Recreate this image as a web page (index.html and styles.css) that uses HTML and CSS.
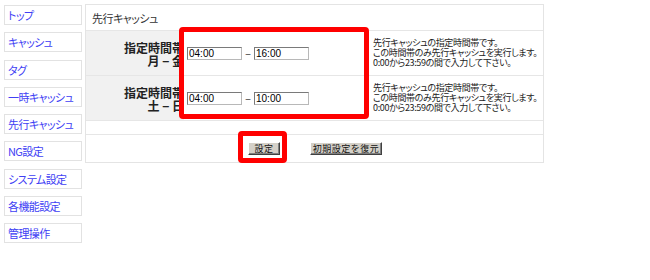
FILE: index.html
```html
<!DOCTYPE html>
<html lang="ja">
<head>
<meta charset="utf-8">
<title>先行キャッシュ</title>
<link rel="stylesheet" href="styles.css">
</head>
<body>
<div class="page">
  <nav class="nav">
    <a class="nav-item" href="#">トップ</a>
    <a class="nav-item" href="#">キャッシュ</a>
    <a class="nav-item" href="#">タグ</a>
    <a class="nav-item" href="#">一時キャッシュ</a>
    <a class="nav-item" href="#">先行キャッシュ</a>
    <a class="nav-item" href="#">NG設定</a>
    <a class="nav-item" href="#">システム設定</a>
    <a class="nav-item" href="#">各機能設定</a>
    <a class="nav-item" href="#">管理操作</a>
  </nav>
  <main class="main">
    <div class="title">先行キャッシュ</div>
    <div class="row">
      <div class="label"><span>指定時間帯</span><span>月 − 金</span></div>
      <div class="inputs"><input class="time" type="text" value="04:00"><span class="dash">−</span><input class="time" type="text" value="16:00"></div>
      <div class="desc">先行キャッシュの指定時間帯です。<br>この時間帯のみ先行キャッシュを実行します。<br>0:00から23:59の間で入力して下さい。</div>
    </div>
    <div class="row">
      <div class="label"><span>指定時間帯</span><span>土 − 日</span></div>
      <div class="inputs"><input class="time" type="text" value="04:00"><span class="dash">−</span><input class="time" type="text" value="10:00"></div>
      <div class="desc">先行キャッシュの指定時間帯です。<br>この時間帯のみ先行キャッシュを実行します。<br>0:00から23:59の間で入力して下さい。</div>
    </div>
    <div class="spacer"></div>
    <div class="actions">
      <button class="btn btn-set" type="button">設定</button>
      <button class="btn btn-reset" type="button">初期設定を復元</button>
    </div>
  </main>
  <div class="annot annot-inputs"></div>
  <div class="annot annot-button"></div>
</div>
</body>
</html>
```

FILE: styles.css
```css
html, body {
  margin: 0;
  padding: 0;
  background: #fff;
}
body {
  font-family: "Noto Sans CJK JP", "Noto Sans", sans-serif;
  font-feature-settings: "palt";
  color: #333;
}
.page {
  position: relative;
  display: flex;
  align-items: flex-start;
  gap: 3px;
  padding: 4px 0 0 4px;
  width: 650px;
  height: 280px;
  box-sizing: border-box;
}
.nav {
  display: flex;
  flex-direction: column;
  width: 78px;
  padding-top: 1px;
}
.nav-item {
  display: flex;
  align-items: center;
  box-sizing: border-box;
  height: 20px;
  margin-bottom: 7.25px;
  padding-left: 3px;
  border: 1px solid #e2e2e2;
  font-size: 11px;
  letter-spacing: -0.6px;
  color: #4040f4;
  text-decoration: none;
  white-space: nowrap;
}
.main {
  width: 459px;
  box-sizing: border-box;
  border: 1px solid #e4e4e4;
}
.title {
  height: 25px;
  display: flex;
  align-items: center;
  padding-left: 6px;
  font-size: 11px;
  letter-spacing: -0.5px;
  color: #333;
}
.row {
  display: grid;
  grid-template-columns: 98px 186px 1fr;
  height: 44px;
  border-top: 1px solid #e6e6e6;
}
.label {
  background: #f1f1f1;
  display: flex;
  flex-direction: column;
  justify-content: center;
  align-items: flex-end;
  padding-top: 1px;
  font-size: 12px;
  font-weight: bold;
  line-height: 13px;
  color: #222;
  white-space: nowrap;
}
.inputs {
  display: flex;
  align-items: center;
  gap: 3px;
  padding-left: 3px;
}
.time {
  box-sizing: border-box;
  width: 55px;
  height: 13px;
  margin: 0;
  padding: 0 1px;
  border: 1px solid;
  border-color: #7a7a7a #b8b8b8 #b8b8b8 #7a7a7a;
  font-family: "Liberation Sans", sans-serif;
  font-size: 10px;
  color: #000;
  background: #fff;
}
.dash {
  width: 6px;
  font-size: 10px;
  color: #333;
  text-align: center;
}
.desc {
  display: flex;
  align-items: center;
  padding-left: 3px;
  font-size: 9px;
  letter-spacing: -0.35px;
  line-height: 10px;
  color: #222;
  white-space: nowrap;
}
.spacer {
  height: 13px;
  border-top: 1px solid #e6e6e6;
}
.actions {
  height: 27px;
  border-top: 1px solid #e6e6e6;
  display: flex;
  align-items: center;
  justify-content: center;
  gap: 30px;
  padding-left: 1px;
}
.btn {
  display: inline-flex;
  align-items: center;
  justify-content: center;
  box-sizing: border-box;
  height: 13px;
  margin: 0;
  padding: 0;
  border: 1px solid;
  border-color: #fff #404040 #404040 #fff;
  box-shadow: inset -1px -1px #808080;
  background: #d4d0c8;
  font-family: "Noto Sans CJK JP", sans-serif;
  font-size: 9px;
  line-height: 9px;
  letter-spacing: 0.5px;
  color: #111;
  overflow: visible;
}
.btn-set {
  width: 32px;
}
.btn-reset {
  width: 72px;
}
.annot {
  position: absolute;
  box-sizing: border-box;
  border: 5px solid #ff0000;
  border-radius: 4px;
}
.annot-inputs {
  left: 179px;
  top: 27px;
  width: 190px;
  height: 92px;
}
.annot-button {
  left: 238px;
  top: 131px;
  width: 49px;
  height: 32px;
}
```
